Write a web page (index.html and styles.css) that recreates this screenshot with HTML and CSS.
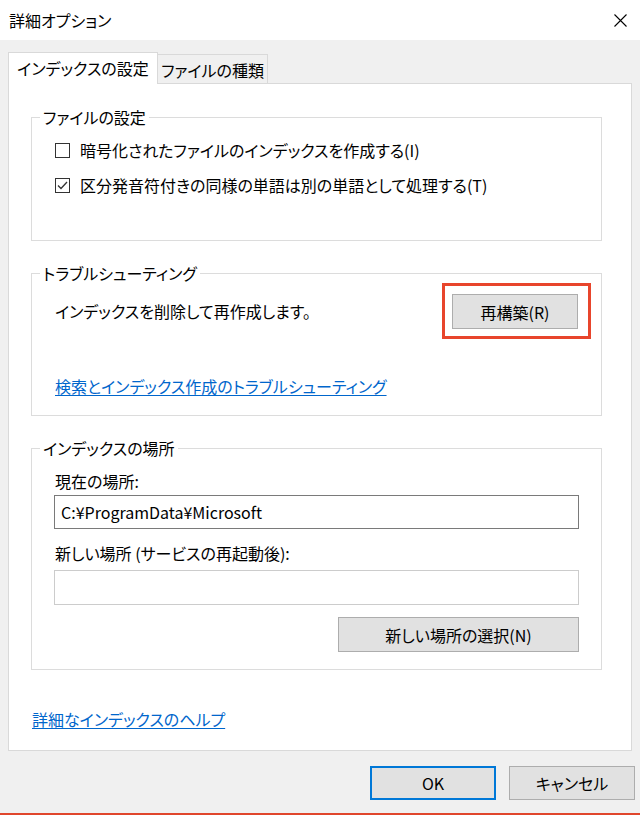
FILE: index.html
```html
<!DOCTYPE html>
<html lang="ja">
<head>
<meta charset="UTF-8" />
<title>詳細オプション</title>
<link rel="stylesheet" href="styles.css">
</head>
<body>
<div class="titlebar">
    <span class="title">詳細オプション</span>
    <svg class="close" width="13" height="13" viewBox="0 0 13 13" aria-label="閉じる">
        <path d="M0.5 0.5 L12.5 12.5 M12.5 0.5 L0.5 12.5" stroke="#000" stroke-width="1.1" fill="none"/>
    </svg>
</div>

<div class="dialog">
    <div class="tabs">
        <div class="tab active">インデックスの設定</div>
        <div class="tab">ファイルの種類</div>
    </div>

    <div class="panel">
        <!-- ファイルの設定 -->
        <fieldset class="group">
            <legend>ファイルの設定</legend>
            <div class="group-body files">
                <label class="check"><span class="box"></span>暗号化されたファイルのインデックスを作成する(I)</label>
                <label class="check">
                    <span class="box">
                        <svg width="13" height="13" viewBox="0 0 13 13"><path d="M2 6.5 L5 9.5 L11 3" stroke="#333" stroke-width="1.3" fill="none"/></svg>
                    </span>区分発音符付きの同様の単語は別の単語として処理する(T)
                </label>
            </div>
        </fieldset>

        <!-- トラブルシューティング -->
        <fieldset class="group">
            <legend>トラブルシューティング</legend>
            <div class="group-body">
                <div class="rebuild-row">
                    <span>インデックスを削除して再作成します。</span>
                    <span class="highlight"><button class="btn btn-rebuild">再構築(R)</button></span>
                </div>
                <a class="link trouble-link" href="#">検索とインデックス作成のトラブルシューティング</a>
            </div>
        </fieldset>

        <!-- インデックスの場所 -->
        <fieldset class="group group-location">
            <legend>インデックスの場所</legend>
            <div class="group-body location">
                <div class="field-label">現在の場所:</div>
                <div class="textbox current">C:¥ProgramData¥Microsoft</div>
                <div class="field-label second">新しい場所 (サービスの再起動後):</div>
                <div class="textbox disabled"></div>
                <div class="select-row">
                    <button class="btn btn-select">新しい場所の選択(N)</button>
                </div>
            </div>
        </fieldset>

        <a class="link help-link" href="#">詳細なインデックスのヘルプ</a>
    </div>

    <div class="actions">
        <button class="btn btn-action btn-default">OK</button>
        <button class="btn btn-action">キャンセル</button>
    </div>
</div>
<div class="redline"></div>
</body>
</html>
```

FILE: styles.css
```css
html, body {
    margin: 0;
    padding: 0;
}

body {
    width: 640px;
    height: 815px;
    overflow: hidden;
    background: #f0f0f0;
    color: #000;
    font-family: "Noto Sans CJK JP", "Noto Sans", sans-serif;
    font-size: 16px;
    line-height: 22px;
    font-feature-settings: "palt";
}

/* Title bar */
.titlebar {
    height: 40px;
    background: #fff;
    display: flex;
    align-items: center;
    justify-content: space-between;
    padding: 0 13px 0 9px;
    box-sizing: border-box;
}

.close {
    display: block;
}

/* Dialog body */
.dialog {
    padding: 12px 8px 0 8px;
}

.tabs {
    display: flex;
    align-items: flex-start;
    height: 32px;
    margin-bottom: -1px;
    position: relative;
    z-index: 1;
}

.tab {
    box-sizing: border-box;
    border: 1px solid #d9d9d9;
    border-bottom: none;
    background: #f0f0f0;
    display: flex;
    align-items: center;
    justify-content: center;
    white-space: nowrap;
    width: 111px;
    height: 29px;
    margin-top: 2px;
    margin-left: -1px;
    padding-top: 1px;
}

.tab.active {
    background: #fff;
    width: 150px;
    height: 32px;
    margin-top: 0;
    margin-left: 0;
    padding-top: 0;
    padding-bottom: 2px;
    z-index: 2;
}

.panel {
    box-sizing: border-box;
    height: 668px;
    background: #fff;
    border: 1px solid #d9d9d9;
    padding: 23px 29px 0 22px;
}

/* Group boxes */
.group {
    margin: 0 0 22px 0;
    padding: 0 10px 18px 8px;
    border: 1px solid #dcdcdc;
    min-width: 0;
}

.group legend {
    padding: 0 3px;
    line-height: 20px;
}

.group-body {
    padding-left: 15px;
}

.group-body.files {
    padding-top: 12px;
    padding-bottom: 26px;
    display: flex;
    flex-direction: column;
    gap: 13px;
}

.check {
    display: flex;
    align-items: center;
    gap: 10px;
    height: 22px;
}

.box {
    box-sizing: border-box;
    width: 15px;
    height: 15px;
    border: 1px solid #333;
    display: flex;
    align-items: center;
    justify-content: center;
    background: #fff;
}

.box svg {
    display: block;
}

.rebuild-row {
    display: flex;
    align-items: center;
    justify-content: space-between;
}

/* red annotation frame around the rebuild button */
.highlight {
    border: 3px solid #e8452c;
    padding: 8px 10px 7px 7px;
    display: block;
}

.btn {
    font-family: inherit;
    font-size: 16px;
    font-feature-settings: "palt";
    color: #000;
    background: #e1e1e1;
    border: 1px solid #adadad;
    margin: 0;
    padding: 0;
    display: block;
    box-sizing: border-box;
    line-height: 22px;
}

.btn-rebuild {
    width: 126px;
    height: 35px;
}

.link {
    color: #0066cc;
    text-decoration: underline;
    text-underline-offset: 2px;
    display: inline-block;
}

.trouble-link {
    margin-top: 36px;
}

.group-location {
    padding-right: 22px;
    padding-bottom: 17px;
}

.location {
    padding-top: 12px;
    padding-left: 14px;
}

.field-label {
    padding-left: 1px;
}

.field-label.second {
    margin-top: 13px;
}

.textbox {
    box-sizing: border-box;
    height: 34px;
    margin-top: 3px;
    border: 1px solid #7a7a7a;
    background: #fff;
    padding: 0 6px;
    display: flex;
    align-items: center;
}

.textbox.disabled {
    border-color: #cccccc;
    height: 35px;
    margin-top: 6px;
}

.select-row {
    display: flex;
    justify-content: flex-end;
    margin-top: 12px;
}

.btn-select {
    width: 241px;
    height: 35px;
}

.help-link {
    margin-top: 16px;
    margin-left: 1px;
}

/* Bottom buttons */
.actions {
    display: flex;
    justify-content: flex-end;
    gap: 13px;
    margin-top: 15px;
    margin-right: -3px;
}

.btn-action {
    width: 126px;
    height: 34px;
}

.btn-default {
    border: 2px solid #0078d7;
}

.redline {
    height: 2px;
    margin-top: 13px;
    background: #e0462c;
}
```
